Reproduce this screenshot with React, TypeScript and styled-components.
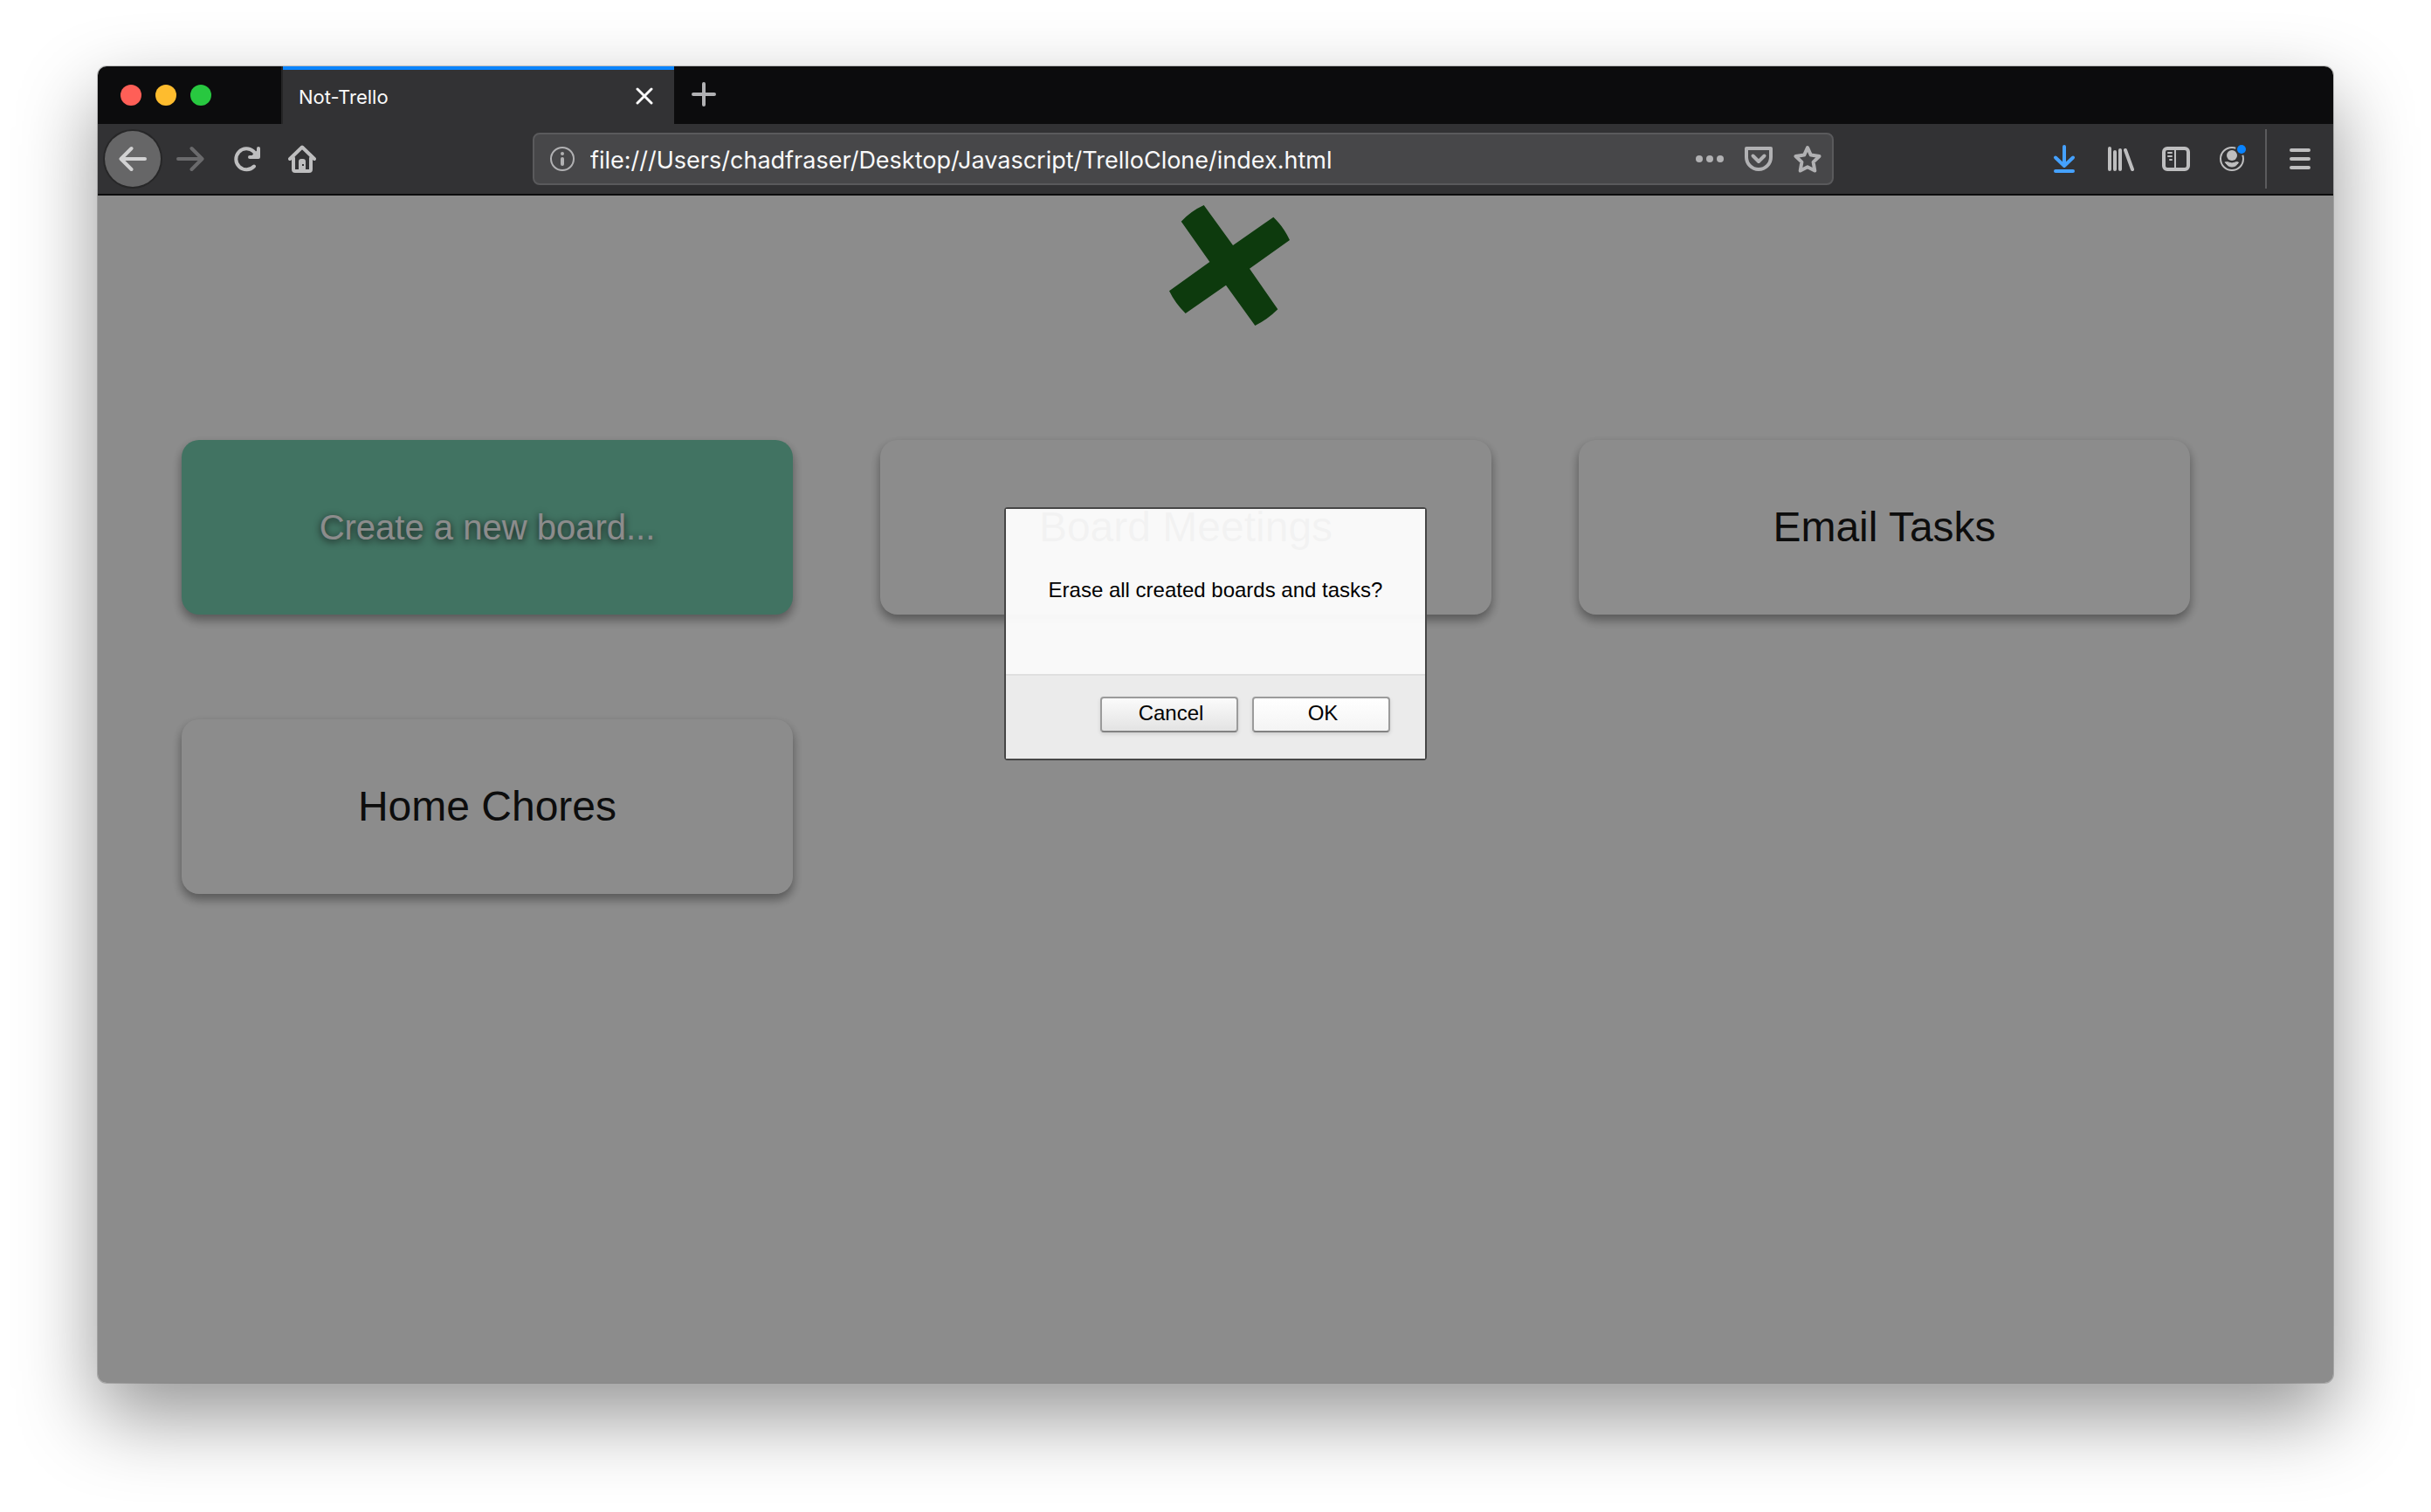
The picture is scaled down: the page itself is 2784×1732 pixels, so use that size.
import React from "react";
import styled, { createGlobalStyle, css } from "styled-components";

const GlobalStyle = createGlobalStyle`
  * { box-sizing: border-box; }
  body { margin: 0; background: #ffffff; }
  button, input { font: inherit; color: inherit; margin: 0; padding: 0; border: 0; background: none; }
`;

const uiFont = css`font-family: Inter, "Open Sans", sans-serif;`;
const pageFont = css`font-family: "Liberation Sans", Arial, sans-serif;`;

const Desktop = styled.div`
  display: flex;
  min-height: 100vh;
  padding: 76px 112px 148px;
`;

const BrowserWindow = styled.div`
  ${uiFont}
  flex: 1;
  min-width: 0;
  display: flex;
  flex-direction: column;
  overflow: hidden;
  border-radius: 10px;
  background: #ffffff;
  box-shadow: 0 0 0 1px rgba(0, 0, 0, 0.2), 0 38px 90px rgba(0, 0, 0, 0.42);
`;

const TitleBar = styled.div`
  display: flex;
  height: 66px;
  background: #0c0c0d;
`;

const WindowControls = styled.div`
  display: flex;
  align-items: center;
  gap: 16px;
  width: 210px;
  padding-left: 26px;
`;

const WindowControl = styled.button<{ $color: string }>`
  width: 24px;
  height: 24px;
  border-radius: 50%;
  background: ${(p) => p.$color};
`;

const Tab = styled.div`
  display: flex;
  align-items: center;
  justify-content: space-between;
  width: 450px;
  padding: 2px 14px 0 18px;
  border-left: 2px solid #252526;
  background: #323234;
  box-shadow: inset 0 4px 0 #0a84ff;
  color: #f9f9fa;
  font-size: 22px;
  line-height: 32px;
`;

const TabTitle = styled.span`
  padding-top: 2px;
`;

const IconButton = styled.button<{ $width?: number }>`
  display: flex;
  align-items: center;
  justify-content: center;
  flex: none;
  width: ${(p) => p.$width ?? 64}px;
  height: 64px;
`;

const TabClose = styled(IconButton)`
  height: 40px;
`;

const ToolBar = styled.div`
  display: flex;
  align-items: center;
  height: 82px;
  padding: 0 6px 0 8px;
  border-bottom: 2px solid #0c0c0d;
  background: #323234;
  color: #bebebf;
`;

const BackButton = styled(IconButton)`
  margin-right: 2px;
  border-radius: 50%;
  background: #666667;
  box-shadow: 0 0 0 2px #272728;
  color: #d2d2d3;
`;

const ForwardButton = styled(IconButton)`
  color: #6a6a6c;
`;

const DownloadButton = styled(IconButton)`
  color: #45a1ff;
`;

const AddressBar = styled.div`
  display: flex;
  align-items: center;
  flex: 1;
  min-width: 0;
  height: 60px;
  margin: 0 232px;
  padding-left: 16px;
  border: 2px solid #5a5a5c;
  border-radius: 8px;
  background: #474749;
  color: #b1b1b3;
`;

const AddressInput = styled.input`
  flex: 1;
  min-width: 0;
  height: 40px;
  margin-left: 16px;
  padding-top: 2px;
  color: #f9f9fa;
  font-size: 27px;
  outline: none;
`;

const Divider = styled.div`
  width: 2px;
  height: 68px;
  margin: 0 6px;
  background: #5b5b5d;
`;

const Viewport = styled.div`
  ${pageFont}
  position: relative;
  flex: 1;
`;

const Boards = styled.main`
  padding: 11px 64px 11px 96px;
`;

const LogoRow = styled.header`
  display: flex;
  justify-content: center;
  margin-bottom: 131px;
`;

const EraseButton = styled.button`
  display: flex;
  width: 138px;
  height: 138px;
`;

const BoardGrid = styled.div`
  display: grid;
  grid-template-columns: repeat(3, 1fr);
  row-gap: 120px;
`;

const BoardCard = styled.button<{ $create?: boolean }>`
  height: 200px;
  margin-right: 100px;
  padding-bottom: 2px;
  border-radius: 20px;
  background: #ffffff;
  color: #000000;
  font-size: 48px;
  box-shadow: 0 6px 12px rgba(0, 0, 0, 0.16), 0 6px 12px rgba(0, 0, 0, 0.3);
  ${(p) =>
    p.$create &&
    css`
      padding-bottom: 0;
      background: #68ccaa;
      color: #ffffff;
      font-size: 40px;
      text-shadow: 0 2px 8px rgba(0, 0, 0, 0.9);
    `}
`;

const Backdrop = styled.div`
  position: absolute;
  inset: 0;
  display: flex;
  justify-content: center;
  align-items: flex-start;
  padding-top: 357px;
  background: rgba(26, 26, 26, 0.5);
`;

const Dialog = styled.div`
  width: 484px;
  border: 2px solid #464646;
  border-radius: 4px;
  color: #000000;
  font-size: 24px;
  line-height: 28px;
`;

const DialogMessage = styled.p`
  height: 189px;
  margin: 0;
  padding-top: 79px;
  background: rgba(255, 255, 255, 0.95);
  text-align: center;
`;

const DialogActions = styled.div`
  display: flex;
  justify-content: flex-end;
  gap: 16px;
  height: 97px;
  padding: 24px 40px 0 0;
  border-top: 2px solid #e0e0e0;
  background: #ebebeb;
`;

const DialogButton = styled.button<{ $primary?: boolean }>`
  width: 158px;
  height: 41px;
  padding: 0 0 4px 4px;
  border: 2px solid #9b9b9b;
  border-bottom-color: #828282;
  border-radius: 4px;
  background: ${(p) =>
    p.$primary
      ? "linear-gradient(#ffffff, #f4f4f4)"
      : "linear-gradient(#fbfbfb, #e3e3e3)"};
  box-shadow: 0 2px 4px rgba(0, 0, 0, 0.12);
`;

const Svg = ({ size = 32, children }: { size?: number; children: React.ReactNode }) => (
  <svg
    width={size}
    height={size}
    viewBox={`0 0 ${size} ${size}`}
    fill="none"
    stroke="currentColor"
    strokeWidth={4}
    strokeLinecap="round"
    strokeLinejoin="round"
    aria-hidden="true"
  >
    {children}
  </svg>
);

const windowControls = [
  { label: "Close window", color: "#ff5f57" },
  { label: "Minimize window", color: "#febc2e" },
  { label: "Zoom window", color: "#28c840" },
];

const boards = ["Board Meetings", "Email Tasks", "Home Chores"];

export default function App() {
  return (
    <>
      <GlobalStyle />
      <Desktop>
        <BrowserWindow>
          <TitleBar>
            <WindowControls>
              {windowControls.map((c) => (
                <WindowControl key={c.label} $color={c.color} aria-label={c.label} />
              ))}
            </WindowControls>
            <Tab>
              <TabTitle>Not-Trello</TabTitle>
              <TabClose $width={40} aria-label="Close tab">
                <Svg size={20}>
                  <path d="M2 2L18 18M18 2L2 18" strokeWidth={3} />
                </Svg>
              </TabClose>
            </Tab>
            <IconButton $width={68} aria-label="New tab">
              <Svg>
                <path d="M16 4V28M4 16H28" stroke="#b1b1b3" />
              </Svg>
            </IconButton>
          </TitleBar>

          <ToolBar>
            <BackButton aria-label="Back">
              <Svg>
                <path d="M14.5 4L2.5 16L14.5 28M4 16H30" />
              </Svg>
            </BackButton>
            <ForwardButton aria-label="Forward">
              <Svg>
                <path d="M17.5 4L29.5 16L17.5 28M28 16H2" />
              </Svg>
            </ForwardButton>
            <IconButton aria-label="Reload">
              <Svg>
                <path d="M25 24.5A12 12 0 1 1 24.5 7.5L27 11" />
                <path d="M30 4V14H20" />
                <path d="M29 7V13H23Z" fill="currentColor" strokeWidth={2} />
              </Svg>
            </IconButton>
            <IconButton aria-label="Home">
              <Svg>
                <path d="M2 16L16 2.5L30 16" />
                <path d="M6 15V28A2 2 0 0 0 8 30H24A2 2 0 0 0 26 28V15" />
                <path
                  d="M12 30V19A3 3 0 0 1 15 16H17A3 3 0 0 1 20 19V30Z"
                  fill="currentColor"
                  stroke="none"
                />
                <rect x="16" y="22" width="2" height="2" fill="#323234" stroke="none" />
              </Svg>
            </IconButton>

            <AddressBar>
              <Svg>
                <circle cx="16" cy="16" r="13" strokeWidth={2} />
                <circle cx="16" cy="10" r="2" fill="currentColor" stroke="none" />
                <path d="M16 16V22" />
              </Svg>
              <AddressInput
                aria-label="Address"
                spellCheck={false}
                defaultValue="file:///Users/chadfraser/Desktop/Javascript/TrelloClone/index.html"
              />
              <IconButton $width={56} aria-label="Page actions">
                <Svg>
                  <g fill="currentColor" stroke="none">
                    <circle cx="4" cy="16" r="4" />
                    <circle cx="16" cy="16" r="4" />
                    <circle cx="28" cy="16" r="4" />
                  </g>
                </Svg>
              </IconButton>
              <IconButton $width={56} aria-label="Save to Pocket">
                <Svg>
                  <path d="M2 4H30V14A14 14 0 0 1 2 14Z" />
                  <path d="M9.5 12.5L16 19L22.5 12.5" />
                </Svg>
              </IconButton>
              <IconButton $width={56} aria-label="Bookmark this page">
                <Svg>
                  <path d="M16 3L19.8 11.6L29.5 13L22.6 19.6L24.3 29.5L16 25.2L7.7 29.5L9.4 19.6L2.5 13L12.2 11.6Z" />
                </Svg>
              </IconButton>
            </AddressBar>

            <DownloadButton aria-label="Downloads">
              <Svg>
                <path d="M16 2V23M6 14.5L16 24L26 14.5M6 30H26" />
              </Svg>
            </DownloadButton>
            <IconButton aria-label="Library">
              <Svg>
                <path d="M4 4V28M10 8V28M16 6V28M22 6L30 28" />
              </Svg>
            </IconButton>
            <IconButton aria-label="Sidebars">
              <Svg>
                <rect x="2" y="4" width="28" height="24" rx="4" />
                <path d="M15 4V28M7 9H11M7 13H11M9 17H11" strokeWidth={2} />
              </Svg>
            </IconButton>
            <IconButton aria-label="Account">
              <Svg>
                <circle cx="16" cy="16" r="13" strokeWidth={2} />
                <circle cx="16" cy="12" r="6" fill="currentColor" stroke="none" />
                <path
                  d="M8.5 20Q11 19 12 20Q16 22 20 20Q21 19 23.5 20Q21 25 16 25T8.5 20Z"
                  fill="currentColor"
                  strokeWidth={1}
                />
                <circle cx="27" cy="5" r="7" fill="#323234" stroke="none" />
                <circle cx="27" cy="5" r="5" fill="#0a84ff" stroke="none" />
              </Svg>
            </IconButton>
            <Divider />
            <IconButton aria-label="Open menu">
              <Svg>
                <path d="M6 6H26M6 16H26M6 26H26" />
              </Svg>
            </IconButton>
          </ToolBar>

          <Viewport>
            <Boards>
              <LogoRow>
                <EraseButton aria-label="Erase boards">
                  <svg width="138" height="138" viewBox="117 75 414 414" aria-hidden="true">
                    <path
                      fill="#005a00"
                      d="M158 131Q192 95 236 75L336 213L475 116Q510 150 531 195L393 293L490 433Q455 468 412 489L312 350L173 447Q137 412 117 370L256 270Z"
                    />
                  </svg>
                </EraseButton>
              </LogoRow>
              <BoardGrid>
                <BoardCard $create>Create a new board...</BoardCard>
                {boards.map((name) => (
                  <BoardCard key={name}>{name}</BoardCard>
                ))}
              </BoardGrid>
            </Boards>
            <Backdrop>
              <Dialog role="dialog" aria-modal="true" aria-labelledby="erase-message">
                <DialogMessage id="erase-message">
                  Erase all created boards and tasks?
                </DialogMessage>
                <DialogActions>
                  <DialogButton>Cancel</DialogButton>
                  <DialogButton $primary>OK</DialogButton>
                </DialogActions>
              </Dialog>
            </Backdrop>
          </Viewport>
        </BrowserWindow>
      </Desktop>
    </>
  );
}
